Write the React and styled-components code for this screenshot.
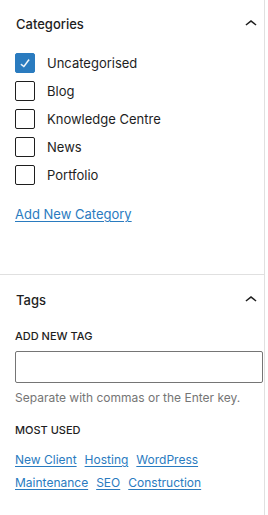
import React from 'react';
import styled, { createGlobalStyle } from 'styled-components';

const GlobalStyle = createGlobalStyle`
  body {
    margin: 0;
    background: #fff;
    font-family: Inter, "Open Sans", "Liberation Sans", sans-serif;
    color: #1e1e1e;
    -webkit-font-smoothing: antialiased;
  }
`;

const blue = '#2a7bbf';

const Sidebar = styled.div`
  width: 264px;
  border-right: 1px solid #e0e0e0;
  min-height: 515px;
`;

const Panel = styled.section`
  border-top: ${p => (p.$divided ? '1px solid #e0e0e0' : 'none')};
  padding-bottom: ${p => p.$bottom || 0}px;
`;

const PanelHeader = styled.button`
  display: flex;
  align-items: center;
  justify-content: space-between;
  width: 100%;
  height: ${p => p.$height || 48}px;
  padding: 0 1px 0 16px;
  border: 0;
  background: none;
  font: inherit;
  font-size: 13px;
  font-weight: 500;
  color: #1e1e1e;
  cursor: pointer;
`;

const PanelBody = styled.div`
  padding: 0 1px 0 15px;
`;

const CheckList = styled.ul`
  list-style: none;
  margin: 1px 0 0;
  padding: 0;
`;

const CheckRow = styled.li`
  display: flex;
  align-items: center;
  height: 28px;
  gap: 12px;
  font-size: 13px;
`;

const Box = styled.span`
  box-sizing: border-box;
  width: 20px;
  height: 20px;
  border-radius: 2px;
  border: 1px solid ${p => (p.$checked ? blue : '#1e1e1e')};
  background: ${p => (p.$checked ? blue : '#fff')};
  display: flex;
  align-items: center;
  justify-content: center;
`;

const Link = styled.a`
  color: ${blue};
  text-decoration: underline;
  text-underline-offset: 2px;
  font-size: ${p => p.$size || 13}px;
  line-height: 20px;
  cursor: pointer;
`;

const AddCategory = styled.div`
  margin-top: 14px;
  line-height: 20px;
`;

const Label = styled.div`
  font-size: 11px;
  font-weight: 500;
  text-transform: uppercase;
  line-height: 16px;
  margin-top: ${p => p.$top}px;
`;

const TagInput = styled.input`
  box-sizing: border-box;
  display: block;
  width: 248px;
  height: 32px;
  margin-top: 7px;
  border: 1px solid #757575;
  border-radius: 2px;
  font: inherit;
  font-size: 13px;
  padding: 0 8px;
`;

const Help = styled.p`
  margin: 7px 0 0;
  font-size: 12px;
  line-height: 16px;
  color: #757575;
`;

const TagCloud = styled.div`
  display: flex;
  flex-wrap: wrap;
  column-gap: 8px;
  row-gap: 3px;
  margin-top: 12px;
`;

const Chevron = () => (
  <svg width="24" height="24" viewBox="0 0 24 24" aria-hidden="true">
    <path d="M6.5 12.4L12 8l5.5 4.4-.9 1.2L12 10l-4.6 3.6-1-1.2z" fill="#1e1e1e" />
  </svg>
);

const Check = () => (
  <svg width="20" height="20" viewBox="0 0 24 24" aria-hidden="true">
    <path
      d="M16.7 7.1l-6.3 8.5-3.2-2.4-.9 1.2 4.4 3.3 7.2-9.7z"
      fill="#fff"
      stroke="#fff"
      strokeWidth="0.5"
      strokeLinejoin="round"
    />
  </svg>
);

const categories = [
  { name: 'Uncategorised', checked: true },
  { name: 'Blog' },
  { name: 'Knowledge Centre' },
  { name: 'News' },
  { name: 'Portfolio' },
];

const tags = ['New Client', 'Hosting', 'WordPress', 'Maintenance', 'SEO', 'Construction'];

export default function App() {
  return (
    <>
      <GlobalStyle />
      <Sidebar>
        <Panel $bottom={50}>
          <PanelHeader>
            Categories
            <Chevron />
          </PanelHeader>
          <PanelBody>
            <CheckList>
              {categories.map(c => (
                <CheckRow key={c.name}>
                  <Box $checked={c.checked}>{c.checked && <Check />}</Box>
                  {c.name}
                </CheckRow>
              ))}
            </CheckList>
            <AddCategory>
              <Link>Add New Category</Link>
            </AddCategory>
          </PanelBody>
        </Panel>
        <Panel $divided>
          <PanelHeader $height={49}>
            Tags
            <Chevron />
          </PanelHeader>
          <PanelBody>
            <Label $top={4}>Add New Tag</Label>
            <TagInput type="text" />
            <Help>Separate with commas or the Enter key.</Help>
            <Label $top={16}>Most Used</Label>
            <TagCloud>
              {tags.map(t => (
                <Link key={t} $size={12}>{t}</Link>
              ))}
            </TagCloud>
          </PanelBody>
        </Panel>
      </Sidebar>
    </>
  );
}
